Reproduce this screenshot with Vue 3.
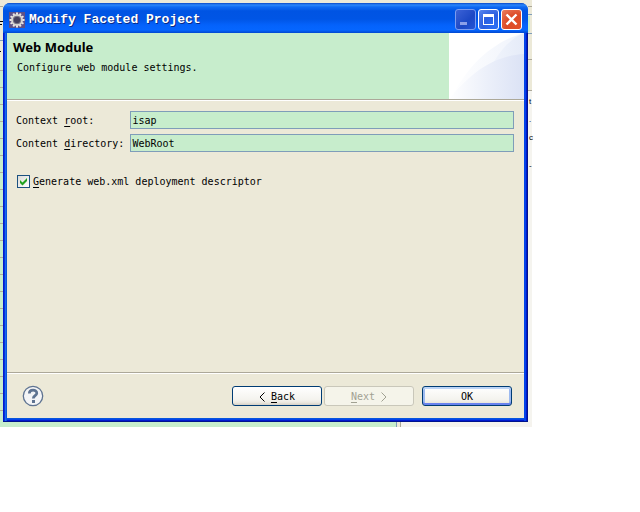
<script setup>
import { ref } from 'vue';

const contextRoot = ref('isap');
const contentDirectory = ref('WebRoot');
const generateDescriptor = ref(true);

const teeth = [0, 30, 60, 90, 120, 150, 180, 210, 240, 270, 300, 330];
</script>

<template>
  <div class="desktop">
    <div class="backdrop">
      <div class="edge-left"></div>
      <form class="dialog" @submit.prevent>
        <header class="titlebar">
          <svg class="gear" viewBox="0 0 16 16" aria-hidden="true">
            <rect width="16" height="16" fill="#5d5085" />
            <g fill="#e9e7e4">
              <rect
                v-for="angle in teeth"
                :key="angle"
                x="7"
                y="0.5"
                width="2"
                height="3"
                :transform="`rotate(${angle} 8 8)`"
              />
            </g>
            <circle cx="8" cy="8" r="5" fill="#45405c" stroke="#d9d7d2" stroke-width="2" />
            <circle cx="8" cy="8" r="3.8" fill="none" stroke="#8b8896" stroke-width="0.8" />
          </svg>
          <h1>Modify Faceted Project</h1>
          <button type="button" class="control minimize" aria-label="Minimize" disabled>
            <svg viewBox="0 0 19 19"><rect x="4" y="12" width="7" height="3" fill="#8c9fe8" /></svg>
          </button>
          <button type="button" class="control" aria-label="Maximize">
            <svg viewBox="0 0 19 19">
              <path d="M4 4h11v11H4zM5 7v7h9V7z" fill="#fff" fill-rule="evenodd" />
            </svg>
          </button>
          <button type="button" class="control close" aria-label="Close">
            <svg viewBox="0 0 19 19">
              <path d="M4.500 4.500l10 10M14.500 4.500l-10 10" stroke="#fff" stroke-width="2.4" fill="none" />
            </svg>
          </button>
        </header>

        <section class="banner">
          <div class="banner-text">
            <h2>Web Module</h2>
            <p>Configure web module settings.</p>
          </div>
          <svg class="banner-art" viewBox="0 0 75 66" aria-hidden="true">
            <defs>
              <linearGradient id="outer" gradientUnits="userSpaceOnUse" x1="0" y1="0" x2="75" y2="0">
                <stop offset="0" stop-color="#fff" />
                <stop offset="1" stop-color="#eff3fb" />
              </linearGradient>
              <linearGradient id="middle" gradientUnits="userSpaceOnUse" x1="30" y1="0" x2="75" y2="0">
                <stop offset="0" stop-color="#f5f8fd" />
                <stop offset="1" stop-color="#e5ebf8" />
              </linearGradient>
              <linearGradient id="inner" gradientUnits="userSpaceOnUse" x1="0" y1="0" x2="75" y2="0">
                <stop offset="0" stop-color="#fff" />
                <stop offset="0.5" stop-color="#ecf0fa" />
                <stop offset="1" stop-color="#dbe2f5" />
              </linearGradient>
            </defs>
            <rect width="75" height="66" fill="#fff" />
            <path d="M3 64C17 35 42 9 75 0V66H3z" fill="url(#outer)" />
            <path d="M30 66C36 38 54 8 75 0V66z" fill="url(#middle)" />
            <path d="M0 66C20 42 42 23 75 21V66z" fill="url(#inner)" />
          </svg>
        </section>

        <section class="content">
          <div class="fields">
            <label for="context-root">Context <u>r</u>oot:</label>
            <input id="context-root" v-model="contextRoot" type="text" />
            <label for="content-directory">Content <u>d</u>irectory:</label>
            <input id="content-directory" v-model="contentDirectory" type="text" />
          </div>
          <label class="check">
            <input v-model="generateDescriptor" type="checkbox" />
            <span><u>G</u>enerate web.xml deployment descriptor</span>
          </label>
        </section>

        <footer class="footer">
          <button type="button" class="help" aria-label="Help">
            <svg viewBox="0 0 22 22">
              <circle cx="11" cy="11" r="9.7" fill="#f3f4f6" stroke="#5e7391" stroke-width="1.3" />
              <path
                d="M7.3 8.5C7.3 3.9 14.8 4 14.8 8.2C14.8 10.6 11.3 10.7 11.3 13.4"
                fill="none"
                stroke="#5e7391"
                stroke-width="2.7"
              />
              <rect x="10" y="15" width="3" height="3" fill="#5e7391" />
            </svg>
          </button>
          <div class="steps">
            <button type="button" class="push">
              <svg class="arrow" viewBox="0 0 6 10"><path d="M5.5 0.5L1 5l4.5 4.5" /></svg>
              <span><u>B</u>ack</span>
            </button>
            <button type="button" class="push" disabled>
              <span><u>N</u>ext</span>
              <svg class="arrow" viewBox="0 0 6 10"><path d="M0.5 0.5L5 5L0.5 9.5" /></svg>
            </button>
          </div>
          <button type="submit" class="push primary">OK</button>
        </footer>
      </form>
      <div class="edge-right">
        <span>t</span>
        <span>.</span>
        <span>c</span>
        <span>-</span>
      </div>
      <div class="edge-bottom">
        <div class="pane"></div>
        <div class="sash"></div>
      </div>
    </div>
  </div>
</template>

<style>
body {
  background: #fff;
}
</style>

<style scoped>
.desktop {
  padding-right: 108px;
  font: 10px/14px 'DejaVu Sans Mono', 'Liberation Mono', monospace;
  color: #000;
}

.backdrop {
  display: grid;
  grid-template-columns: 3px minmax(0, 1fr) 4px;
  padding-top: 3px;
  background: #ece9d8;
}

.edge-left {
  background:
    linear-gradient(#aca899, #aca899) 0 3px / 3px 1px no-repeat,
    linear-gradient(#000, #000) 0 18px / 3px 1px no-repeat,
    linear-gradient(#000, #000) 0 21px / 2px 1px no-repeat,
    linear-gradient(#7f9db9, #7f9db9) 0 37px / 3px 1px no-repeat,
    linear-gradient(#000, #000) 0 48px / 1px 1px no-repeat,
    linear-gradient(#ece9d8, #ece9d8) 0 0 / 3px 57px no-repeat,
    repeating-linear-gradient(#c7edcc 0 16px, #b0ad9c 16px 17px) 0 51px;
}

.edge-right {
  display: flex;
  flex-direction: column;
  gap: 4px;
  padding: 92px 0 0 1px;
  font: 8px/14px 'Liberation Sans', sans-serif;
  background:
    linear-gradient(#aca899, #aca899) 0 3px / 4px 1px no-repeat,
    linear-gradient(#7f9db9, #7f9db9) 0 11px / 4px 1px no-repeat,
    linear-gradient(#c7edcc, #c7edcc) 0 13px / 2px 16px no-repeat,
    linear-gradient(#7f9db9, #7f9db9) 0 30px / 4px 1px no-repeat,
    linear-gradient(#aca899, #aca899) 0 56px / 4px 1px no-repeat,
    linear-gradient(#aca899, #aca899) 0 87px / 4px 1px no-repeat,
    linear-gradient(#ece9d8, #ece9d8) 0 0 / 4px 88px no-repeat,
    #f5f4ef;
}

.edge-right span:last-child {
  margin-top: 10px;
}

.edge-bottom {
  grid-column: 1 / -1;
  display: flex;
  height: 5px;
  background: #f5f3ee;
}

.pane {
  flex: 0 0 75%;
  margin-right: -3px;
  background: #c7edcc;
}

.sash {
  width: 3px;
  border: solid #7f9db9;
  border-width: 0 1px;
  border-right-color: #aca899;
  background: #ece9d8;
}

.dialog {
  display: flex;
  flex-direction: column;
  border-radius: 7px 7px 0 0;
  padding: 0 4px 4px;
  background:
    linear-gradient(90deg, #0019cf 1px, #0831d9 1px 2px, #166aee 2px 3px, #0855dd 3px) 0 7px / 4px calc(100% - 8px) no-repeat,
    linear-gradient(270deg, #00138c 1px, #0019cf 1px 2px, #0344e8 2px) 100% 7px / 4px calc(100% - 8px) no-repeat,
    linear-gradient(#0855dd 1px, #0344e8 1px 2px, #0019cf 2px 3px, #00138c 3px) 0 100% / 100% 4px no-repeat,
    #0855dd;
}

.titlebar {
  display: flex;
  align-items: center;
  gap: 2px;
  height: 30px;
  margin: 0 -4px;
  padding: 3px 6px 0;
  box-sizing: border-box;
  border-radius: 7px 7px 0 0;
  background: linear-gradient(
    #0848c8 0,
    #2b86fa 2px,
    #0f6af2 4px,
    #0054e3 8px,
    #0055e5 16px,
    #0462fb 22px,
    #0566ff 27px,
    #0148cf 30px
  );
}

.gear {
  width: 16px;
  height: 16px;
}

h1 {
  flex: 1;
  margin: 0 0 0 2px;
  font: bold 13px/16px 'Liberation Mono', monospace;
  color: #fff;
  text-shadow: 1px 1px #0a2a86;
  white-space: nowrap;
}

.control {
  width: 21px;
  height: 21px;
  padding: 0;
  border: 1px solid #fff;
  border-radius: 3px;
  background: radial-gradient(circle at 80% 85%, #2c6ff5, #2b5fe0 50%, #5b87ee);
}

.control svg {
  display: block;
  width: 19px;
  height: 19px;
}

.minimize {
  border-color: #7c9cf0;
  background: linear-gradient(135deg, #3c62d6, #1c48c4 60%, #2455d6);
}

.close {
  background: radial-gradient(circle at 80% 85%, #e2502a, #dc4a26 50%, #ec8062);
}

.banner {
  display: flex;
  justify-content: space-between;
  height: 66px;
  border-bottom: 1px solid #aca899;
  background: #c7edcc;
}

.banner-text {
  padding: 6px;
}

h2 {
  margin: 0;
  font: bold 13px/16px 'Noto Sans', 'Open Sans', sans-serif;
}

p {
  margin: 6px 4px 0;
}

.banner-art {
  flex: none;
  width: 75px;
  height: 66px;
}

.content {
  min-height: 272px;
  padding: 10px 10px 0 9px;
  box-sizing: border-box;
  border-top: 1px solid #fff;
  background: #ece9d8;
}

.fields {
  display: grid;
  grid-template-columns: auto minmax(0, 1fr);
  align-items: center;
  gap: 5px 6px;
}

.fields label {
  padding-top: 2px;
}

.fields input {
  height: 18px;
  padding: 0 1px;
  box-sizing: border-box;
  border: 1px solid #7f9db9;
  background: #c7edcc;
  font: inherit;
  color: inherit;
}

u {
  text-underline-offset: 2px;
}

.check {
  display: flex;
  align-items: center;
  gap: 3px;
  width: fit-content;
  margin: 21px 0 0 1px;
}

.check span {
  padding-top: 2px;
}

.check input {
  appearance: none;
  width: 13px;
  height: 13px;
  margin: 0;
  border: 1px solid #1c5180;
  background: linear-gradient(135deg, #dcdcd7, #fff);
}

.check input:checked {
  background:
    url("data:image/svg+xml,%3Csvg xmlns='http://www.w3.org/2000/svg' viewBox='0 0 11 11'%3E%3Cpath d='M2 4v3l2.500 2.500L9 5V2L4.500 6.500z' fill='%2321a121'/%3E%3C/svg%3E") center / 11px 11px no-repeat,
    linear-gradient(135deg, #dcdcd7, #fff);
}

.footer {
  display: flex;
  align-items: center;
  gap: 8px;
  min-height: 46px;
  padding: 0 12px 0 15px;
  box-sizing: border-box;
  border-top: 1px solid #aca899;
  background: #ece9d8;
  box-shadow: inset 0 1px #fff;
}

.help {
  width: 22px;
  height: 22px;
  margin-right: auto;
  padding: 0;
  border: 0;
  background: none;
}

.help svg {
  display: block;
}

.steps {
  display: flex;
  gap: 2px;
}

.push {
  display: flex;
  align-items: center;
  justify-content: center;
  gap: 6px;
  width: 90px;
  height: 20px;
  padding: 2px 0 0;
  border: 1px solid #003c74;
  border-radius: 3px;
  background: linear-gradient(#fff, #f4f3ee 70%, #ece9e1 85%, #d6d0c5);
  font: inherit;
  color: #000;
}

.push:disabled {
  border-color: #c9c7ba;
  background: #f5f4ea;
  color: #a1a192;
}

.primary {
  box-shadow: inset 0 2px #bcd4f6, inset 0 -2px #6982ee, inset 2px 0 #9dbaf0, inset -2px 0 #9dbaf0;
}

.arrow {
  width: 6px;
  height: 10px;
  fill: none;
  stroke: currentColor;
}
</style>
